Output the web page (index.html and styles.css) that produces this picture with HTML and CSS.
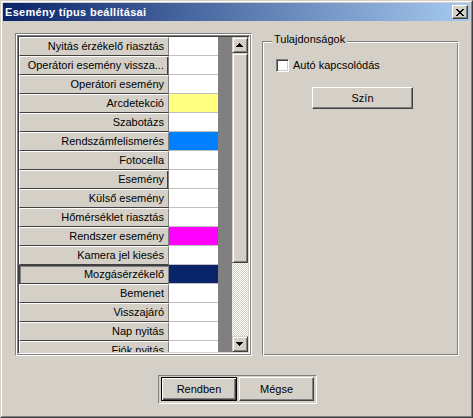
FILE: index.html
```html
<!DOCTYPE html>
<html lang="hu">
<head>
<meta charset="utf-8">
<title>Esemény típus beállításai</title>
<link rel="stylesheet" href="styles.css">
</head>
<body>
<div class="window">
  <div class="window-inner">
    <div class="titlebar">
      <span class="title">Esemény típus beállításai</span>
      <button class="close" type="button" aria-label="Bezárás">
        <svg class="close-x" width="8" height="7" viewBox="0 0 8 7" shape-rendering="crispEdges">
          <path d="M0 0h2v1H0zM6 0h2v1H6zM1 1h2v1H1zM5 1h2v1H5zM2 2h4v1H2zM3 3h2v1H3zM2 4h4v1H2zM1 5h2v1H1zM5 5h2v1H5zM0 6h2v1H0zM6 6h2v1H6z" fill="#000"/>
        </svg>
      </button>
    </div>
    <div class="client">
      <div class="top-row">
        <div class="bevel">
          <div class="grid">
            <div class="grid-body">
              <div class="cells">
                <div class="row"><div class="lab">Nyitás érzékelő riasztás</div><div class="col"></div></div>
                <div class="row"><div class="lab edge-r">Operátori esemény vissza...</div><div class="col"></div></div>
                <div class="row"><div class="lab">Operátori esemény</div><div class="col"></div></div>
                <div class="row"><div class="lab">Arcdetekció</div><div class="col c-yellow"></div></div>
                <div class="row"><div class="lab">Szabotázs</div><div class="col"></div></div>
                <div class="row"><div class="lab">Rendszámfelismerés</div><div class="col c-blue"></div></div>
                <div class="row"><div class="lab">Fotocella</div><div class="col"></div></div>
                <div class="row"><div class="lab edge-r">Esemény</div><div class="col"></div></div>
                <div class="row"><div class="lab">Külső esemény</div><div class="col"></div></div>
                <div class="row"><div class="lab">Hőmérséklet riasztás</div><div class="col"></div></div>
                <div class="row"><div class="lab">Rendszer esemény</div><div class="col c-magenta"></div></div>
                <div class="row"><div class="lab">Kamera jel kiesés</div><div class="col"></div></div>
                <div class="row"><div class="lab pressed">Mozgásérzékelő</div><div class="col c-navy"></div></div>
                <div class="row"><div class="lab">Bemenet</div><div class="col"></div></div>
                <div class="row"><div class="lab">Visszajáró</div><div class="col"></div></div>
                <div class="row"><div class="lab">Nap nyitás</div><div class="col"></div></div>
                <div class="row"><div class="lab">Fiók nyitás</div><div class="col"></div></div>
              </div>
              <div class="empty"></div>
              <div class="scrollbar">
                <div class="sb-btn">
                  <svg width="8" height="4" viewBox="0 0 8 4" shape-rendering="crispEdges"><path d="M3 0h1v1H3zM2 1h3v1H2zM1 2h5v1H1zM0 3h7v1H0z" fill="#000"/></svg>
                </div>
                <div class="sb-thumb"></div>
                <div class="sb-track"></div>
                <div class="sb-btn">
                  <svg width="8" height="4" viewBox="0 0 8 4" shape-rendering="crispEdges"><path d="M0 0h7v1H0zM1 1h5v1H1zM2 2h3v1H2zM3 3h1v1H3z" fill="#000"/></svg>
                </div>
              </div>
            </div>
          </div>
        </div>
        <div class="group">
          <div class="legend">Tulajdonságok</div>
          <label class="check-row"><span class="checkbox"></span><span>Autó kapcsolódás</span></label>
          <button class="btn btn-color" type="button">Szín</button>
        </div>
      </div>
      <div class="button-row">
        <div class="btnframe">
          <button class="btn btn-ok default" type="button">Rendben</button>
          <button class="btn btn-cancel" type="button">Mégse</button>
        </div>
      </div>
    </div>
  </div>
</div>
</body>
</html>
```
FILE: styles.css
```css
* { box-sizing: border-box; }

html, body {
  margin: 0;
  padding: 0;
  background: #d4d0c8;
}

body {
  font-family: "Liberation Sans", Arial, sans-serif;
  font-size: 11px;
  color: #000;
}

.window {
  width: 473px;
  height: 418px;
  border: 1px solid;
  border-color: #d4d0c8 #404040 #404040 #d4d0c8;
  background: #d4d0c8;
}

.window-inner {
  height: 100%;
  border: 1px solid;
  border-color: #fff #808080 #808080 #fff;
  padding: 1px;
  display: flex;
  flex-direction: column;
}

/* title bar */
.titlebar {
  flex: none;
  height: 18px;
  display: flex;
  align-items: center;
  padding: 0 2px;
  background: linear-gradient(to right, #0a246a, #a6caf0);
}

.title {
  flex: 1;
  color: #fff;
  font-weight: bold;
  font-size: 11px;
  letter-spacing: 0.3px;
  line-height: 18px;
  white-space: nowrap;
}

.close {
  width: 16px;
  height: 14px;
  padding: 3px 0 0 0;
  border: 1px solid;
  border-color: #fff #404040 #404040 #fff;
  box-shadow: inset -1px -1px 0 #808080;
  background: #d4d0c8;
  display: flex;
  justify-content: center;
  align-items: flex-start;
}

.close-x { display: block; }

/* client area */
.client {
  flex: 1;
  display: flex;
  flex-direction: column;
  padding: 12px 11px 0 12px;
}

.top-row {
  display: flex;
  align-items: flex-start;
  gap: 10px;
}

/* list */
.bevel {
  width: 237px;
  height: 323px;
  border: 1px solid;
  border-color: #808080 #fff #fff #808080;
  box-shadow: inset 1px 1px 0 #fff, inset -1px -1px 0 #808080;
  padding: 1px;
}

.grid {
  height: 100%;
  border: 1px solid;
  border-color: #808080 #fff #fff #808080;
  box-shadow: inset 1px 1px 0 #404040, inset -1px -1px 0 #d4d0c8;
  padding: 1px;
}

.grid-body {
  height: 100%;
  display: flex;
}

.cells {
  width: 199px;
  flex: none;
  overflow: hidden;
}

.row {
  display: flex;
  height: 19px;
}

.lab {
  width: 150px;
  flex: none;
  border-top: 1px solid #fff;
  border-left: 1px solid #fff;
  border-bottom: 1px solid #404040;
  border-right: 1px solid #808080;
  padding-right: 4px;
  text-align: right;
  line-height: 17px;
  white-space: nowrap;
  overflow: hidden;
  background: #d4d0c8;
}

.lab.edge-r {
  box-shadow: inset -1px 0 0 #404040;
}

.lab.pressed {
  border-top-color: #404040;
  border-left-color: #404040;
  box-shadow: inset 1px 1px 0 #808080;
}

.col {
  width: 49px;
  flex: none;
  background: #fff;
  border-bottom: 1px solid #c0c0c0;
}

.c-yellow { background: #ffff80; }
.c-blue { background: #0080ff; }
.c-magenta { background: #ff00ff; }
.c-navy { background: #0a246a; }

.empty {
  width: 14px;
  flex: none;
  background: #808080;
}

/* scrollbar */
.scrollbar {
  width: 16px;
  flex: none;
  display: flex;
  flex-direction: column;
}

.sb-btn,
.sb-thumb {
  flex: none;
  border: 1px solid;
  border-color: #d4d0c8 #404040 #404040 #d4d0c8;
  box-shadow: inset 1px 1px 0 #fff, inset -1px -1px 0 #808080;
  background: #d4d0c8;
}

.sb-btn {
  height: 16px;
  display: flex;
  align-items: center;
  justify-content: center;
}

.sb-btn svg { display: block; }

.sb-thumb { height: 210px; }

.sb-track {
  flex: 1;
  background-image: conic-gradient(#fff 25%, #d4d0c8 0 50%, #fff 0 75%, #d4d0c8 0);
  background-size: 2px 2px;
}

/* group box */
.group {
  width: 197px;
  height: 315px;
  flex: none;
  margin-top: 8px;
  border: 1px solid;
  border-color: #808080 #fff #fff #808080;
  box-shadow: inset 1px 1px 0 #fff, inset -1px -1px 0 #808080;
  display: flex;
  flex-direction: column;
  align-items: flex-start;
}

.legend {
  margin: -9px 0 0 9px;
  padding: 0 2px;
  line-height: 13px;
  background: #d4d0c8;
  white-space: nowrap;
}

.check-row {
  display: flex;
  align-items: center;
  gap: 4px;
  height: 13px;
  margin: 13px 0 0 13px;
  line-height: 13px;
  white-space: nowrap;
}

.checkbox {
  width: 13px;
  height: 13px;
  flex: none;
  border: 1px solid;
  border-color: #808080 #fff #fff #808080;
  box-shadow: inset 1px 1px 0 #404040, inset -1px -1px 0 #d4d0c8;
  background: #fff;
}

/* buttons */
.btn {
  font: inherit;
  color: #000;
  background: #d4d0c8;
  border: 1px solid;
  border-color: #fff #404040 #404040 #fff;
  box-shadow: inset -1px -1px 0 #808080;
  padding: 0;
  height: 24px;
  flex: none;
}

.btn.default {
  border-color: #000;
  box-shadow: inset 1px 1px 0 #fff, inset -1px -1px 0 #404040, inset -2px -2px 0 #808080;
}

.btn-color {
  width: 101px;
  height: 22px;
  margin: 15px 0 0 49px;
}

.btn-ok { width: 76px; }
.btn-cancel { width: 75px; }

.button-row {
  display: flex;
  justify-content: center;
  padding-left: 1px;
  margin-top: 19px;
}

.btnframe {
  display: flex;
  gap: 2px;
  border: 1px solid;
  border-color: #808080 #fff #fff #808080;
  padding: 1px 2px 2px 2px;
}
```
